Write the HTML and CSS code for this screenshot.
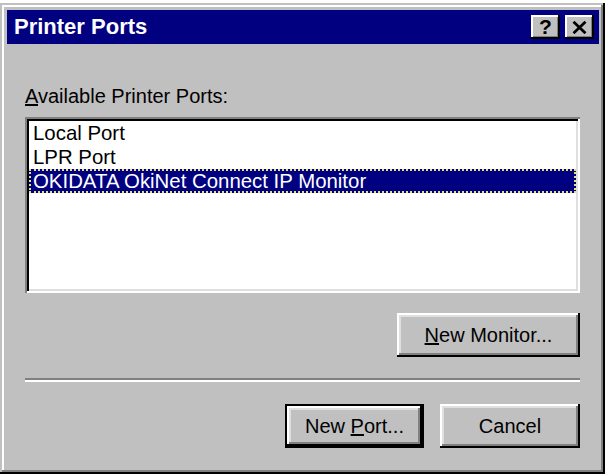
FILE: index.html
```html
<!DOCTYPE html>
<html>
<head>
<meta charset="utf-8">
<title>Printer Ports</title>
<link rel="stylesheet" href="styles.css">
</head>
<body>
<div class="window">
  <div class="titlebar">
    <span class="title">Printer Ports</span>
    <div class="tbtns">
      <span class="tbtn help">?</span>
      <span class="tbtn close"><svg width="15" height="13" viewBox="0 0 15 13"><path d="M1.5 0.8 L13.5 12.2 M13.5 0.8 L1.5 12.2" stroke="#000" stroke-width="2.8" fill="none"/></svg></span>
    </div>
  </div>
  <div class="content">
    <div class="label"><u>A</u>vailable Printer Ports:</div>
    <div class="listbox">
      <div class="item">Local Port</div>
      <div class="item">LPR Port</div>
      <div class="item selected">OKIDATA OkiNet Connect IP Monitor</div>
    </div>
    <div class="btnrow first">
      <button class="btn wide"><u>N</u>ew Monitor...</button>
    </div>
    <div class="sep"></div>
    <div class="btnrow last">
      <button class="btn default">New <u>P</u>ort...</button>
      <button class="btn">Cancel</button>
    </div>
  </div>
</div>
</body>
</html>
```

FILE: styles.css
```css
body {
  margin: 0;
  background: #ffffff;
  font-family: "Liberation Sans", Arial, sans-serif;
}

.window {
  margin-top: 3px;
  width: 605px;
  height: 471px;
  box-sizing: border-box;
  background: #c0c0c0;
  padding: 7px 6px 4px 7px;
  box-shadow:
    inset -2px -2px 0 #000000,
    inset 2px 2px 0 #c0c0c0,
    inset -4px -4px 0 #808080,
    inset 4px 4px 0 #ffffff;
}

.titlebar {
  height: 34px;
  background: #000080;
  display: flex;
  align-items: center;
  justify-content: space-between;
  padding: 0 5px 0 7px;
}

.title {
  color: #ffffff;
  font-weight: bold;
  font-size: 22px;
}

.tbtns {
  display: flex;
  gap: 5px;
}

.tbtn {
  width: 29px;
  height: 24px;
  box-sizing: border-box;
  background: #c0c0c0;
  display: flex;
  align-items: center;
  justify-content: center;
  box-shadow:
    inset -2px -2px 0 #000000,
    inset 2px 2px 0 #ffffff,
    inset -3px -3px 0 #808080;
}

.help {
  font-weight: bold;
  font-size: 21px;
  color: #000;
}

.content {
  padding: 0 19px 0 18px;
}

.label {
  margin-top: 41px;
  font-size: 20px;
  line-height: 23px;
  color: #000;
}

.listbox {
  margin-top: 9px;
  height: 176px;
  box-sizing: border-box;
  background: #ffffff;
  padding: 4px;
  box-shadow:
    inset 2px 2px 0 #808080,
    inset -2px -2px 0 #ffffff,
    inset 4px 4px 0 #000000,
    inset -4px -4px 0 #dfdfdf;
}

.item {
  height: 24px;
  line-height: 24px;
  padding-left: 4px;
  font-size: 20.4px;
  color: #000;
  white-space: nowrap;
}

.item.selected {
  background: #000080;
  color: #ffffff;
  outline: 2px dotted #e6e27a;
  outline-offset: -2px;
}

.btnrow {
  display: flex;
  justify-content: flex-end;
  gap: 16px;
}

.btnrow.first {
  margin-top: 20px;
}

.btnrow.last {
  margin-top: 22px;
}

.btn {
  height: 44px;
  width: 140px;
  border: none;
  padding: 0;
  background: #c0c0c0;
  font-family: "Liberation Sans", Arial, sans-serif;
  font-size: 20px;
  color: #000;
  box-shadow:
    inset -2px -2px 0 #000000,
    inset 2px 2px 0 #ffffff,
    inset -4px -4px 0 #808080,
    inset 4px 4px 0 #dfdfdf;
}

.btn.wide {
  width: 183px;
}

.btn.default {
  width: 139px;
  box-shadow:
    inset 0 0 0 2px #000000,
    inset -4px -4px 0 #000000,
    inset 4px 4px 0 #ffffff,
    inset -6px -6px 0 #808080,
    inset 6px 6px 0 #dfdfdf;
}

.sep {
  margin-top: 21px;
  height: 2px;
  background: #808080;
  border-bottom: 2px solid #ffffff;
}
```
